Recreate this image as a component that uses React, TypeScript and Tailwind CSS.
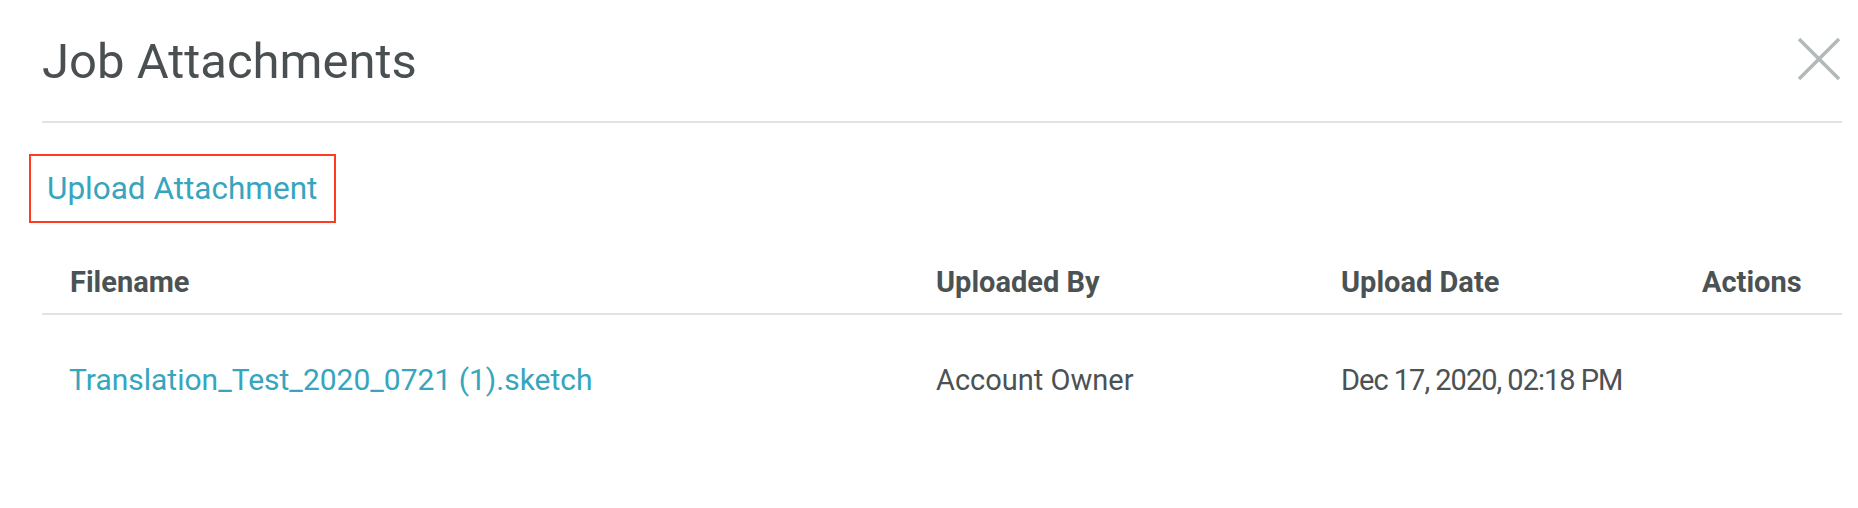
import React from 'react';

const rows = [
  {
    filename: 'Translation_Test_2020_0721 (1).sketch',
    uploadedBy: 'Account Owner',
    date: 'Dec 17, 2020, 02:18 PM',
  },
];

function CloseIcon() {
  return (
    <svg width="44" height="44" viewBox="0 0 44 44" fill="none" className="shrink-0">
      <line x1="2" y1="2" x2="42" y2="42" stroke="#b3b9b9" strokeWidth="3.5" />
      <line x1="42" y1="2" x2="2" y2="42" stroke="#b3b9b9" strokeWidth="3.5" />
    </svg>
  );
}

export default function App() {
  return (
    <div
      className="min-h-[508px] w-full bg-white pl-[42px] pr-[16px] text-[#4b5254]"
      style={{ fontFamily: 'Roboto, "Liberation Sans", sans-serif' }}
    >
      {/* Header */}
      <div className="flex items-start justify-between border-b-2 border-[#e3e3e3] pt-[34px] pb-[31px]">
        <h1 className="text-[49px] leading-[56px] font-normal text-[#4a5051]">Job Attachments</h1>
        <div className="mt-[3px] mr-[1px]">
          <CloseIcon />
        </div>
      </div>

      {/* Upload */}
      <div className="mt-[31px]">
        <button className="-ml-[13px] border-2 border-[#ff3b21] pl-[16px] pr-[17px] pt-[15px] pb-[14px] text-[31.5px] leading-[36px] text-[#36a5bd]">
          Upload Attachment
        </button>
      </div>

      {/* Table */}
      <div className="mt-[43px]">
        <div className="grid grid-cols-[866px_405px_361px_1fr] border-b-2 border-[#e3e3e3] pb-[15px] text-[29px] leading-[32px] font-bold">
          <div className="pl-[28px]">Filename</div>
          <div className="pl-[28px]">Uploaded By</div>
          <div className="pl-[28px]">Upload Date</div>
          <div className="pl-[28px]">Actions</div>
        </div>
        {rows.map((r) => (
          <div
            key={r.filename}
            className="grid grid-cols-[866px_405px_361px_1fr] pt-[48px] text-[29px] leading-[34px]"
          >
            <a className="pl-[27px] text-[30px] text-[#36a5bd]">{r.filename}</a>
            <div className="pl-[28px]">{r.uploadedBy}</div>
            <div className="pl-[28px] tracking-[-1px]">{r.date}</div>
            <div className="pl-[28px]" />
          </div>
        ))}
      </div>
    </div>
  );
}
